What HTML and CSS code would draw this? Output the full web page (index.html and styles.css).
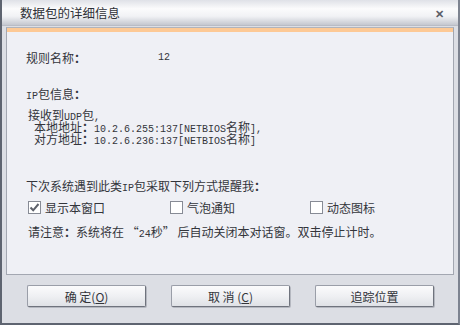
FILE: index.html
```html
<!DOCTYPE html>
<html lang="zh-CN">
<head>
    <meta charset="UTF-8">
    <title>数据包的详细信息</title>
    <link rel="stylesheet" href="styles.css">
</head>
<body>
    <div class="window">
        <div class="titlebar">
            <span class="title">数据包的详细信息</span>
            <span class="close">&#x2715;</span>
        </div>
        <div class="body">
            <div class="panel">
                <div class="panel-top"></div>
                <div class="rule-name">
                    <span class="label">规则名称<span class="colon">：</span></span>
                    <span class="num">12</span>
                </div>
                <div class="section-title"><span class="num">IP</span>包信息<span class="colon">：</span></div>
                <div class="info">
                    <div class="info-first">接收到<span class="num">UDP</span>包<span class="num">,</span></div>
                    <div class="info-line">本地地址<span class="colon">：</span><span class="num">10.2.6.255:137[NETBIOS</span>名称<span class="num">],</span></div>
                    <div class="info-line">对方地址<span class="colon">：</span><span class="num">10.2.6.236:137[NETBIOS</span>名称<span class="num">]</span></div>
                </div>
                <div class="remind">下次系统遇到此类<span class="num">IP</span>包采取下列方式提醒我<span class="colon">：</span></div>
                <div class="options">
                    <label class="option opt-1"><span class="box"><svg width="11" height="11" viewBox="0 0 11 11"><path d="M1.5 5.5 L4.2 8.3 L9.5 2" fill="none" stroke="#5d616b" stroke-width="2"/></svg></span>显示本窗口</label>
                    <label class="option opt-2"><span class="box"></span>气泡通知</label>
                    <label class="option opt-3"><span class="box"></span>动态图标</label>
                </div>
                <div class="notice">请注意<span class="colon">：</span>系统将在 “<span class="num">24</span>秒” 后自动关闭本对话窗。双击停止计时。</div>
            </div>
            <div class="buttons">
                <button type="button">确 定(<u>O</u>)</button>
                <button type="button">取 消 (<u>C</u>)</button>
                <button type="button">追踪位置</button>
            </div>
        </div>
    </div>
</body>
</html>
```

FILE: styles.css
```css
body {
    margin: 0;
    padding: 0;
    font-family: "Noto Sans CJK SC", "Liberation Sans", sans-serif;
    font-size: 12px;
    color: #33353b;
}
.window {
    width: 460px;
    height: 325px;
    box-sizing: border-box;
    border-left: 2px solid #5e6470;
    border-right: 2px solid #7d8390;
    border-bottom: 2px solid #5e6470;
    display: flex;
    flex-direction: column;
    background-color: #dcdee4;
}
.titlebar {
    height: 25px;
    flex-shrink: 0;
    display: flex;
    align-items: center;
    justify-content: space-between;
    padding: 0 14px 0 18px;
    background: linear-gradient(#dfe1e7, #fbfbfc 35%, #f1f2f5 65%, #c4c7cf);
    border-bottom: 1px solid #b9bcc5;
}
.title {
    font-size: 12.5px;
    color: #2e3036;
}
.close {
    font-size: 11px;
    font-weight: bold;
    color: #5a5e68;
}
.body {
    flex: 1;
    display: flex;
    flex-direction: column;
    padding: 1px 4px 0 4px;
}
.panel {
    height: 248px;
    border: 1px solid #a3a7b1;
    border-top-color: #b0b3bb;
    background-color: #eff0f5;
    box-sizing: border-box;
    padding-left: 19px;
}
.panel-top {
    height: 4px;
    margin-left: -19px;
    background-color: #fdc995;
}
.num {
    font-family: "Liberation Mono", monospace;
    font-size: 10px;
}
.colon {
    font-family: "Noto Sans CJK TC", sans-serif;
    font-weight: bold;
}
.rule-name {
    margin-top: 19px;
    height: 14px;
    line-height: 14px;
    display: flex;
}
.rule-name .label {
    width: 132px;
}
.section-title {
    margin-top: 22px;
    height: 14px;
    line-height: 14px;
}
.info {
    margin-top: 7px;
    padding-left: 2px;
}
.info-first {
    height: 13px;
    line-height: 13px;
}
.info-line {
    height: 12px;
    line-height: 12px;
    padding-left: 6px;
}
.remind {
    margin-top: 34px;
    height: 14px;
    line-height: 14px;
}
.options {
    margin-top: 7px;
    height: 15px;
    display: flex;
    line-height: 15px;
    padding-left: 2px;
}
.option {
    display: flex;
    align-items: center;
}
.opt-1 {
    width: 142px;
}
.opt-2 {
    width: 140px;
}
.box {
    width: 11px;
    height: 11px;
    border: 1px solid #878b95;
    background-color: #fff;
    margin-right: 4px;
    display: inline-flex;
    align-items: center;
    justify-content: center;
}
.notice {
    margin-top: 10px;
    height: 14px;
    line-height: 14px;
    padding-left: 2px;
}
.buttons {
    display: flex;
    gap: 25px;
    padding: 10px 0 0 21px;
}
button {
    width: 119px;
    height: 22px;
    padding: 0;
    font-family: "Noto Sans CJK SC", "Liberation Sans", sans-serif;
    font-size: 12px;
    color: #33353b;
    border: 1px solid #6f737d;
    border-top-color: #9a9ea8;
    border-left-color: #9a9ea8;
    border-radius: 2px;
    background: linear-gradient(#fbfbfc, #eff0f3 50%, #dfe1e6);
    box-shadow: 1px 1px 0 #b5b8c0;
}
```
